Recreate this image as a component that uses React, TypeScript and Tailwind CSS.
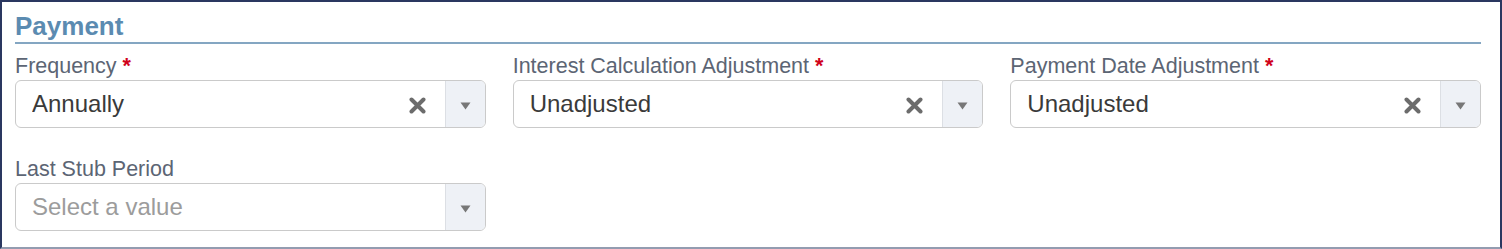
const fieldFont = { fontFamily: '"Liberation Sans", Arial, Helvetica, sans-serif' };

function ClearIcon() {
  return (
    <svg width="17" height="17" viewBox="0 0 17 17" className="shrink-0">
      <path d="M2.5 2.5 L14.5 14.5 M14.5 2.5 L2.5 14.5" stroke="#6c6c6c" strokeWidth="4" strokeLinecap="round" />
    </svg>
  );
}

function Caret() {
  return (
    <svg width="11" height="8" viewBox="0 0 11 8">
      <path d="M0.5 0.5 L10.5 0.5 L5.5 7.5 Z" fill="#777777" />
    </svg>
  );
}

type FieldProps = {
  label: string;
  required?: boolean;
  value?: string;
  placeholder?: string;
};

function SelectField({ label, required, value, placeholder }: FieldProps) {
  return (
    <div className="flex flex-col">
      <label className="h-[24px] leading-[24px] text-[21.5px] text-[#5c6574] whitespace-nowrap">
        {label}
        {required && <span className="ml-[6px] font-bold text-[#d0021b]">*</span>}
      </label>
      <div className="mt-[2px] h-[48px] flex items-stretch border border-[#cacaca] rounded-[6px] bg-white overflow-hidden">
        <div className="flex-1 flex items-center pl-4 pr-[19px] min-w-0">
          {value ? (
            <span className="flex-1 text-[24px] text-[#3a3a3a] truncate">{value}</span>
          ) : (
            <span className="flex-1 text-[24px] text-[#9c9c9c] truncate">{placeholder}</span>
          )}
          {value && (
            <span className="mt-[2px]">
              <ClearIcon />
            </span>
          )}
        </div>
        <div className="w-[40px] flex items-center justify-center border-l border-[#dcdfe4] bg-[#eef1f6] pt-[4px]">
          <Caret />
        </div>
      </div>
    </div>
  );
}

export default function App() {
  return (
    <div
      style={fieldFont}
      className="w-[1502px] h-[249px] bg-white border-2 border-[#2a3760] border-b-[#939cb0] pl-[13px] pr-[19px] pt-[9px]"
    >
      <div className="border-b-2 border-[#84a6c2] pb-[1px]">
        <h2 className="text-[26px] leading-[30px] font-bold text-[#5b8bb1]">Payment</h2>
      </div>
      <div className="mt-[10px] grid grid-cols-3 gap-x-[27px] gap-y-[29px]">
        <SelectField label="Frequency" required value="Annually" />
        <SelectField label="Interest Calculation Adjustment" required value="Unadjusted" />
        <SelectField label="Payment Date Adjustment" required value="Unadjusted" />
        <SelectField label="Last Stub Period" placeholder="Select a value" />
      </div>
    </div>
  );
}
